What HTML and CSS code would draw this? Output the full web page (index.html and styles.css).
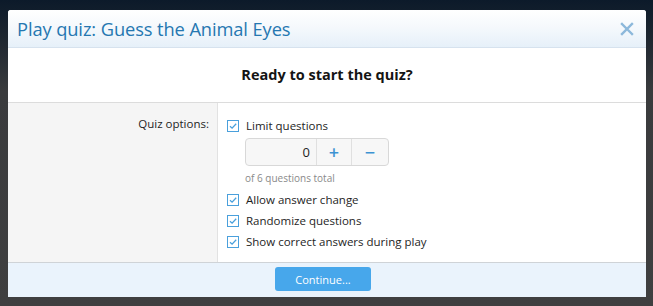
FILE: index.html
```html
<!DOCTYPE html>
<html>
<head>
<meta charset="utf-8">
<link rel="stylesheet" href="styles.css">
</head>
<body>
<div class="backdrop">
  <div class="dialog">
    <div class="dlg-header">
      <span class="dlg-title">Play quiz: Guess the Animal Eyes</span>
      <span class="dlg-close">
        <svg width="14" height="14" viewBox="0 0 14 14"><path d="M2 2L12 12M12 2L2 12" stroke="#8cb8db" stroke-width="2.4" stroke-linecap="square"/></svg>
      </span>
    </div>
    <div class="dlg-intro">Ready to start the quiz?</div>
    <div class="form-row">
      <div class="form-label">Quiz options:</div>
      <div class="form-controls">
        <label class="check"><span class="box"><svg width="12" height="12" viewBox="0 0 12 12"><rect x="0.5" y="0.5" width="11" height="11" fill="#fff" stroke="#4aa0dc"/><path d="M3 6.2L5.1 8.2L9.2 3.8" fill="none" stroke="#4aa0dc" stroke-width="1.3"/></svg></span>Limit questions</label>
        <div class="spinner">
          <span class="spin-value">0</span>
          <span class="spin-btn plus">+</span>
          <span class="spin-btn minus">−</span>
        </div>
        <div class="hint">of 6 questions total</div>
        <label class="check"><span class="box"><svg width="12" height="12" viewBox="0 0 12 12"><rect x="0.5" y="0.5" width="11" height="11" fill="#fff" stroke="#4aa0dc"/><path d="M3 6.2L5.1 8.2L9.2 3.8" fill="none" stroke="#4aa0dc" stroke-width="1.3"/></svg></span>Allow answer change</label>
        <label class="check"><span class="box"><svg width="12" height="12" viewBox="0 0 12 12"><rect x="0.5" y="0.5" width="11" height="11" fill="#fff" stroke="#4aa0dc"/><path d="M3 6.2L5.1 8.2L9.2 3.8" fill="none" stroke="#4aa0dc" stroke-width="1.3"/></svg></span>Randomize questions</label>
        <label class="check"><span class="box"><svg width="12" height="12" viewBox="0 0 12 12"><rect x="0.5" y="0.5" width="11" height="11" fill="#fff" stroke="#4aa0dc"/><path d="M3 6.2L5.1 8.2L9.2 3.8" fill="none" stroke="#4aa0dc" stroke-width="1.3"/></svg></span>Show correct answers during play</label>
      </div>
    </div>
    <div class="dlg-footer">
      <div class="footer-spacer"></div>
      <div class="footer-main"><button class="btn-primary">Continue...</button></div>
    </div>
  </div>
</div>
</body>
</html>
```
FILE: styles.css
```css
html, body {
  margin: 0;
  padding: 0;
}
body {
  width: 653px;
  height: 306px;
  overflow: hidden;
  font-family: "Open Sans", "Noto Sans", sans-serif;
  background: linear-gradient(180deg, #0c1a2a 0%, #1d2630 12%, #3a3b3d 30%, #3f3f40 100%);
}
.backdrop {
  padding: 10px 7px 0 8px;
}
.dialog {
  width: 638px;
  height: 287px;
  background: #fff;
  border-radius: 3px 3px 0 0;
  display: flex;
  flex-direction: column;
  box-sizing: border-box;
  overflow: hidden;
}
.dlg-header {
  height: 38px;
  box-sizing: border-box;
  border-bottom: 1px solid #d6e2ee;
  background: linear-gradient(180deg, #ffffff 0%, #f4f8fc 50%, #e6f0f9 100%);
  display: flex;
  align-items: center;
  justify-content: space-between;
  padding: 0 12px 0 9px;
}
.dlg-title {
  font-size: 18.3px;
  color: #2577b1;
  letter-spacing: -0.1px;
}
.dlg-close {
  display: flex;
  width: 14px;
  height: 14px;
}
.dlg-intro {
  height: 55px;
  box-sizing: border-box;
  border-bottom: 1px solid #dcdcdc;
  display: flex;
  align-items: center;
  justify-content: center;
  font-weight: 700;
  font-size: 14.5px;
  color: #141414;
  padding-bottom: 1px;
}
.form-row {
  flex: 1;
  display: flex;
}
.form-label {
  width: 210px;
  background: #f5f5f5;
  border-right: 1px solid #e2e2e2;
  text-align: right;
  box-sizing: border-box;
  padding: 13px 8px 0 0;
  font-size: 11.5px;
  color: #1e1e1e;
}
.form-controls {
  flex: 1;
  padding: 12px 0 0 9px;
  display: flex;
  flex-direction: column;
  font-size: 11.5px;
  color: #1e1e1e;
}
.check {
  display: flex;
  align-items: center;
  height: 21px;
}
.box {
  display: flex;
  width: 12px;
  height: 12px;
  margin-right: 7px;
}
.spinner {
  margin: 2px 0 0 18px;
  width: 144px;
  height: 28px;
  box-sizing: border-box;
  border: 1px solid #d8d8d8;
  border-radius: 4px;
  background: #f7f7f7;
  display: flex;
}
.spin-value {
  flex: 1;
  display: flex;
  align-items: center;
  justify-content: flex-end;
  padding-right: 6px;
  font-size: 13px;
  color: #1e1e1e;
}
.spin-btn {
  width: 34px;
  border-left: 1px solid #e0e0e0;
  display: flex;
  align-items: center;
  justify-content: center;
  color: #3d93d2;
  font-size: 18px;
  font-weight: 600;
}
.spin-btn.minus {
  width: 36px;
}
.hint {
  margin: 5px 0 4px 18px;
  font-size: 10px;
  color: #8a8a8a;
}
.dlg-footer {
  height: 35px;
  box-sizing: border-box;
  border-top: 1px solid #cfd3d7;
  background: #eaf3fc;
  display: flex;
}
.footer-spacer {
  width: 210px;
}
.footer-main {
  flex: 1;
  display: flex;
  justify-content: flex-start;
  padding: 4px 0 0 57px;
}
.btn-primary {
  width: 96px;
  height: 24px;
  border: 0;
  border-radius: 3px;
  background: #47a7eb;
  color: #fff;
  font-family: "Open Sans", "Noto Sans", sans-serif;
  font-size: 11px;
  padding: 0;
}
```
